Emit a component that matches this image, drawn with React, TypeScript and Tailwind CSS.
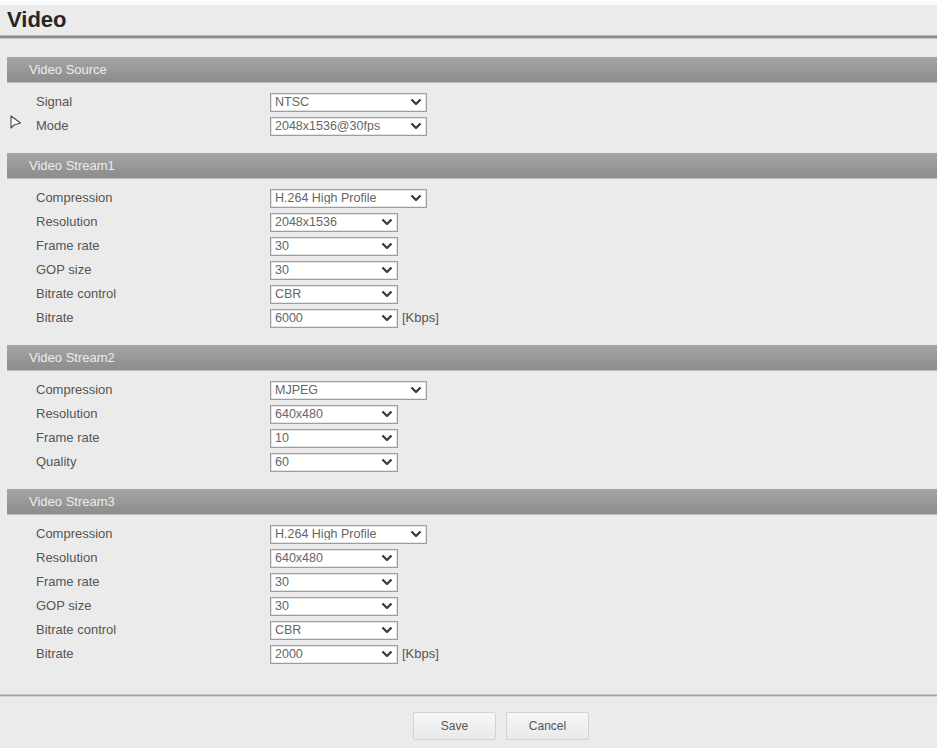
type Field = {
  label: string;
  value: string;
  wide?: boolean;
  unit?: string;
};

type Section = {
  title: string;
  fields: Field[];
};

const SECTIONS: Section[] = [
  {
    title: 'Video Source',
    fields: [
      { label: 'Signal', value: 'NTSC', wide: true },
      { label: 'Mode', value: '2048x1536@30fps', wide: true },
    ],
  },
  {
    title: 'Video Stream1',
    fields: [
      { label: 'Compression', value: 'H.264 High Profile', wide: true },
      { label: 'Resolution', value: '2048x1536' },
      { label: 'Frame rate', value: '30' },
      { label: 'GOP size', value: '30' },
      { label: 'Bitrate control', value: 'CBR' },
      { label: 'Bitrate', value: '6000', unit: '[Kbps]' },
    ],
  },
  {
    title: 'Video Stream2',
    fields: [
      { label: 'Compression', value: 'MJPEG', wide: true },
      { label: 'Resolution', value: '640x480' },
      { label: 'Frame rate', value: '10' },
      { label: 'Quality', value: '60' },
    ],
  },
  {
    title: 'Video Stream3',
    fields: [
      { label: 'Compression', value: 'H.264 High Profile', wide: true },
      { label: 'Resolution', value: '640x480' },
      { label: 'Frame rate', value: '30' },
      { label: 'GOP size', value: '30' },
      { label: 'Bitrate control', value: 'CBR' },
      { label: 'Bitrate', value: '2000', unit: '[Kbps]' },
    ],
  },
];

function Chevron() {
  return (
    <svg width="12" height="8" viewBox="0 0 12 8" className="shrink-0">
      <path d="M1.5 1.5 L6 6 L10.5 1.5" fill="none" stroke="#3a3a3a" strokeWidth="2.3" strokeLinejoin="round" />
    </svg>
  );
}

function FakeSelect({ value, wide }: { value: string; wide?: boolean }) {
  return (
    <div
      className={`${wide ? 'w-[157px]' : 'w-[128px]'} h-[19px] bg-white border border-[#9d9d9d] shadow-[inset_0_0_0_1px_#e4e4e4] flex items-center justify-between pl-[4px] pr-[4px]`}
    >
      <span className="text-[12.5px] text-[#666] leading-none truncate">{value}</span>
      <Chevron />
    </div>
  );
}

// mouse pointer resting next to the Mode row
function Pointer() {
  return (
    <svg width="12" height="15" viewBox="0 0 12 15" className="absolute left-[3px] top-[-1px]">
      <path d="M1 1 L1 13 L4 10 L10.5 8 Z" fill="#fff" stroke="#4a4a4a" strokeWidth="1.1" strokeLinejoin="round" />
    </svg>
  );
}

export default function App() {
  return (
    <div
      className="w-[937px] min-h-[748px] bg-[#ebebeb] border-t-[5px] border-[#fafafa] text-[#4d4d4d]"
      style={{ fontFamily: '"Liberation Sans", Arial, sans-serif' }}
    >
      <h1 className="h-[30px] pl-[7px] text-[22px] leading-[30px] font-bold text-[#262626]">Video</h1>
      <div className="h-[4px] border-t border-[#b4b4b4] bg-[#8b8b8b] border-b border-b-[#c8c8c8]" />

      <div className="mt-[18px] ml-[7px]">
        {SECTIONS.map((s) => (
          <section key={s.title}>
            <div className="h-[26px] bg-gradient-to-b from-[#a5a5a5] to-[#8c8c8c] border-b border-[#bdbdbd] flex items-center pl-[22px] text-[13px] text-[#ececec]">
              {s.title}
            </div>
            <div className="pt-[7px] pb-[15px]">
              {s.fields.map((f) => (
                <div key={f.label} className="h-[24px] flex items-center">
                  <div className="w-[263px] pl-[29px] text-[13px] text-[#555] relative">
                    {f.label === 'Mode' && <Pointer />}
                    {f.label}
                  </div>
                  <FakeSelect value={f.value} wide={f.wide} />
                  {f.unit && <span className="ml-[4px] text-[13px] text-[#555]">{f.unit}</span>}
                </div>
              ))}
            </div>
          </section>
        ))}
      </div>

      <div className="mt-[13px] h-[3px] border-t border-[#c4c4c4] bg-[#a3a3a3] border-b border-b-[#d6d6d6]" />

      <div className="pt-[15px] pb-[8px] flex gap-[10px] pl-[413px]">
        <button className="w-[83px] h-[28px] rounded-[2px] border border-[#d2d2d2] bg-gradient-to-b from-[#f7f7f7] to-[#e9e9e9] text-[12px] text-[#555]">
          Save
        </button>
        <button className="w-[83px] h-[28px] rounded-[2px] border border-[#d2d2d2] bg-gradient-to-b from-[#f7f7f7] to-[#e9e9e9] text-[12px] text-[#555]">
          Cancel
        </button>
      </div>
    </div>
  );
}
